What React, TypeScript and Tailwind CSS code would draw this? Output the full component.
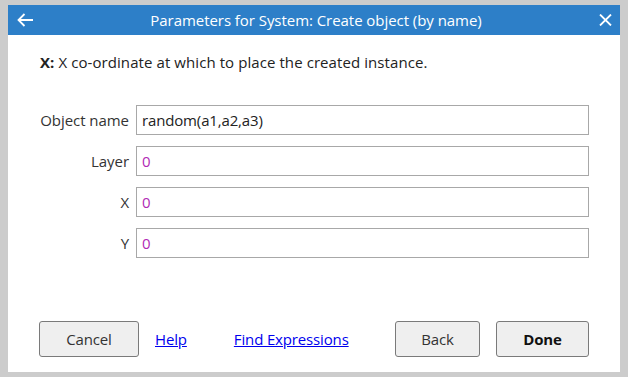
import React from "react";

export default function App() {
  const rows: { label: string; value: string; purple?: boolean }[] = [
    { label: "Object name", value: "random(a1,a2,a3)" },
    { label: "Layer", value: "0", purple: true },
    { label: "X", value: "0", purple: true },
    { label: "Y", value: "0", purple: true },
  ];
  return (
    <div
      className="w-[628px] h-[377px] bg-[#cccccc] pt-[5px] pl-[8px]"
      style={{ fontFamily: '"Open Sans", "Noto Sans", sans-serif' }}
    >
      <div className="w-[612px] h-[367px] bg-white flex flex-col">
        <div className="h-[30px] shrink-0 bg-[#2d7fc8] flex items-center text-white relative">
          <svg className="absolute left-[9px] top-[8px]" width="17" height="14" viewBox="0 0 17 14">
            <path d="M16 7H1.5M7.5 1L1.5 7l6 6" stroke="white" strokeWidth="1.8" fill="none" />
          </svg>
          <div className="flex-1 text-center text-[15px] tracking-[-0.05px] pl-[4px]">
            Parameters for System: Create object (by name)
          </div>
          <svg className="absolute left-[591px] top-[9px]" width="13" height="12" viewBox="0 0 13 12">
            <path d="M1 0.5L12 11.5M12 0.5L1 11.5" stroke="white" strokeWidth="1.8" fill="none" />
          </svg>
        </div>
        <div className="pl-[32px] pt-[17px] text-[15px] text-[#222] tracking-[0.08px] leading-[20px]">
          <b>X:</b> X co-ordinate at which to place the created instance.
        </div>
        <div className="mt-[33px] flex flex-col gap-[11px]">
          {rows.map((r) => (
            <div key={r.label} className="flex items-center h-[30px]">
              <div className="w-[121px] text-right text-[15px] text-[#333] tracking-[-0.05px]">
                {r.label}
              </div>
              <div className="ml-[7px] w-[453px] h-[30px] border border-[#a8a8a8] flex items-center pl-[5px] text-[15px] tracking-[-0.15px]">
                <span className={r.purple ? "text-[#b12ab5]" : "text-[#222]"}>{r.value}</span>
              </div>
            </div>
          ))}
        </div>
        <div className="flex-1" />
        <div className="flex items-center h-[36px] mb-[15px] text-[15px] tracking-[-0.15px]">
          <button className="ml-[31px] w-[100px] h-[36px] bg-[#efefef] border border-[#7a7a7a] rounded-[3px] text-[#333]">
            Cancel
          </button>
          <a className="ml-[16px] text-[#0000ee] underline cursor-pointer">Help</a>
          <a className="ml-[47px] text-[#0000ee] underline cursor-pointer">Find Expressions</a>
          <div className="flex-1" />
          <button className="w-[85px] h-[36px] bg-[#efefef] border border-[#7a7a7a] rounded-[3px] text-[#333]">
            Back
          </button>
          <button className="ml-[16px] mr-[31px] w-[93px] h-[36px] bg-[#efefef] border border-[#7a7a7a] rounded-[3px] text-[#111] font-bold">
            Done
          </button>
        </div>
      </div>
    </div>
  );
}
